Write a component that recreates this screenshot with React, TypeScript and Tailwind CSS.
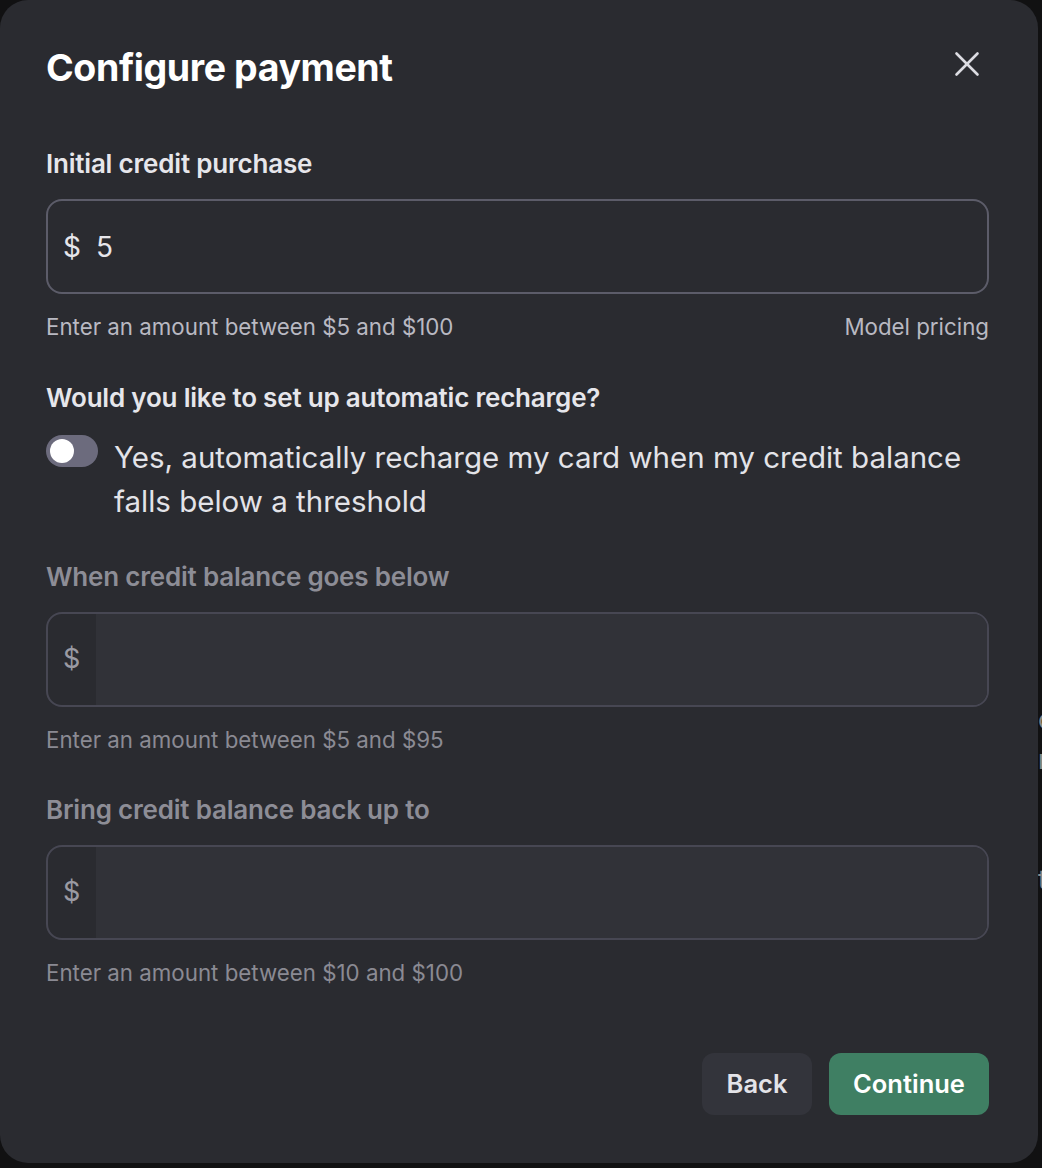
import { X } from "lucide-react";

const font = { fontFamily: "Inter, 'Noto Sans', sans-serif" };

interface AmountFieldProps {
    label: string;
    hint: string;
}

// disabled recharge inputs, grey label + darker prefix
const AmountField: React.FC<AmountFieldProps> = (props) => {
    return (
        <div className="flex flex-col">
            <div className="text-[26px] font-semibold text-[#8d8d96] leading-[32px] tracking-[-0.2px]">{props.label}</div>
            <div className="mt-[19px] flex h-[95px] overflow-hidden rounded-[16px] border-2 border-[#474753]">
                <div className="flex w-[48px] items-center pl-[15px] text-[27px] text-[#9a9aa3]">$</div>
                <div className="flex-1 bg-[#313238]"></div>
            </div>
            <div className="mt-[18px] text-[22.3px] leading-[30px] text-[#8a8a93]">{props.hint}</div>
        </div>
    );
};

export default function App() {
    return (
        <div className="flex min-h-[1168px] w-[1042px] bg-[#111112]" style={font}>
            <div className="flex h-[1163px] w-[1038px] shrink-0 flex-col rounded-[28px] bg-[#2a2b30] pl-[46px] pr-[49px]">
                <div className="flex items-center justify-between pt-[44px]">
                    <h1 className="text-[37.5px] font-bold leading-[48px] tracking-[-0.4px] text-white">Configure payment</h1>
                    <X className="mr-[1px] mt-[-8px] text-[#dcdce2]" size={42} strokeWidth={1.5} />
                </div>

                <div className="mt-[56px] text-[26px] font-semibold leading-[32px] tracking-[-0.2px] text-[#e6e6eb]">Initial credit purchase</div>
                <div className="mt-[19px] flex h-[95px] items-center gap-[15px] rounded-[16px] border-2 border-[#5c5c69] px-[15px] text-[28px] text-[#e6e6eb]">
                    <span>$</span>
                    <span>5</span>
                </div>
                <div className="mt-[18px] flex justify-between text-[22.3px] leading-[30px] text-[#b9b9c2]">
                    <span>Enter an amount between $5 and $100</span>
                    <span>Model pricing</span>
                </div>

                <div className="mt-[40px] text-[26px] font-semibold leading-[32px] tracking-[-0.2px] text-[#e6e6eb]">
                    Would you like to set up automatic recharge?
                </div>
                <div className="mt-[21px] flex gap-[16px]">
                    <button className="flex h-[32px] w-[52px] shrink-0 items-center rounded-full bg-[#6c6b7d] px-[4px]">
                        <span className="h-[24px] w-[24px] rounded-full bg-white"></span>
                    </button>
                    <div className="text-[29.5px] leading-[44px] text-[#e3e3e8]">
                        Yes, automatically recharge my card when my credit balance falls below a threshold
                    </div>
                </div>

                <div className="mt-[38px] flex flex-col gap-[39px]">
                    <AmountField label="When credit balance goes below" hint="Enter an amount between $5 and $95" />
                    <AmountField label="Bring credit balance back up to" hint="Enter an amount between $10 and $100" />
                </div>

                <div className="mt-auto mb-[48px] flex justify-end gap-[17px]">
                    <button className="h-[62px] w-[110px] rounded-[12px] bg-[#33343b] text-[25.5px] font-semibold text-[#e3e3e8]">Back</button>
                    <button className="h-[62px] w-[160px] rounded-[12px] bg-[#3f7f63] text-[25.5px] font-semibold text-white">Continue</button>
                </div>
            </div>
            {/* whatever sits behind the dialog, cut off at the window edge */}
            <div className="flex w-[4px] flex-col overflow-hidden pt-[700px] text-[26px] leading-[40px] text-[#8a8a8a]">
                <span>c</span>
                <span>r</span>
                <span className="mt-[80px]">t</span>
            </div>
        </div>
    );
}
